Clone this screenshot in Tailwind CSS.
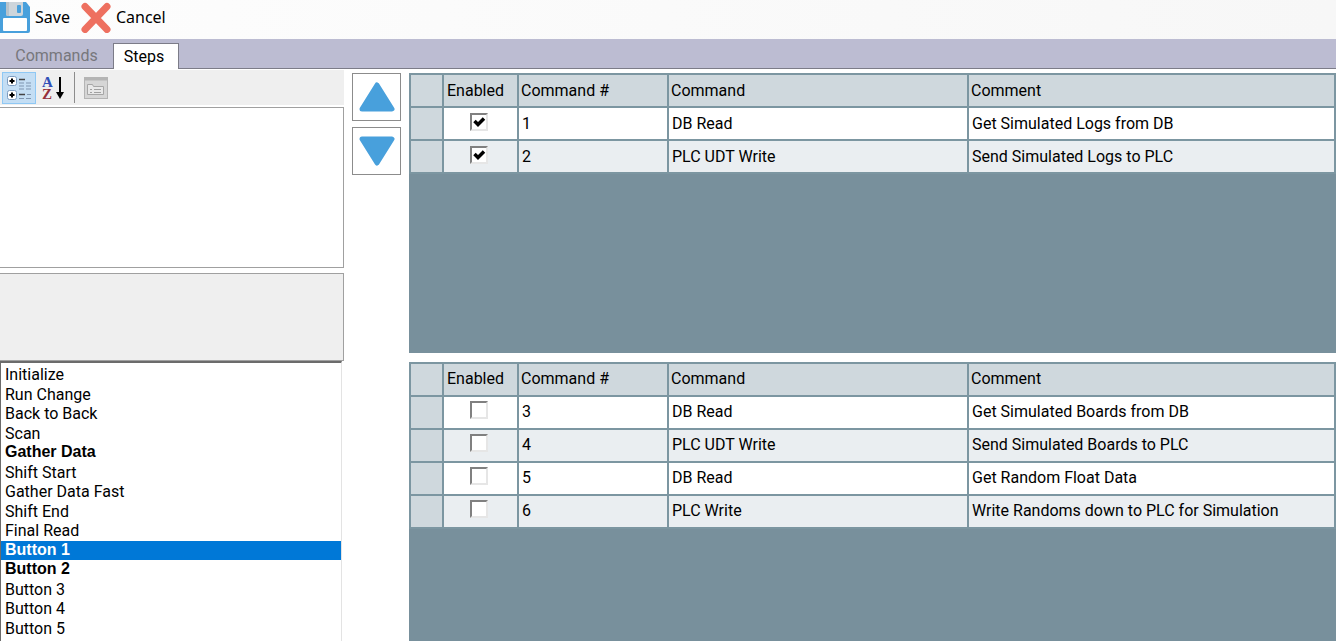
<!DOCTYPE html>
<html lang="en">
<head>
  <meta charset="UTF-8">
  <meta name="viewport" content="width=device-width, initial-scale=1.0">
  <title>Steps</title>
  <script src="https://cdn.jsdelivr.net/npm/@tailwindcss/browser@4"></script>
</head>
<body class="flex flex-col h-screen overflow-hidden bg-white text-black text-base font-['Roboto','Liberation_Sans',sans-serif]">

  <!-- toolbar -->
  <header class="flex shrink-0 items-start h-[39px] gap-2.5 bg-linear-to-r from-[#fdfdfd] to-[#f7f7f7] font-['Noto_Sans','Open_Sans',sans-serif]">
    <button class="flex items-center h-[34px] gap-1">
      <svg class="w-[31px] h-8" viewBox="0 0 31 32">
        <path d="M0 1h26l4 5v24a2 2 0 0 1-2 2H0z" fill="#48a0dc"/>
        <path d="M6 1h17v12a2 2 0 0 1-2 2H8a2 2 0 0 1-2-2z" fill="#cdd5db"/>
        <path d="M6 1h3v14H8a2 2 0 0 1-2-2z" fill="#b8c3cb"/>
        <rect x="17" y="4" width="4" height="8" rx="1" fill="#48a0dc"/>
        <rect x="3" y="17" width="24" height="13" rx="1" fill="#fff"/>
      </svg>
      Save
    </button>
    <button class="flex items-center h-[34px] gap-1">
      <svg class="w-8 h-8" viewBox="0 0 32 32">
        <path d="M5 5.500L27 28.500M27 5.500L5 28.500" stroke="#ee7060" stroke-width="7" stroke-linecap="round"/>
      </svg>
      Cancel
    </button>
  </header>

  <!-- tabs -->
  <nav class="flex shrink-0 items-end h-[30px] bg-[#bcbcd2] border-b border-[#7c7c88]">
    <button class="w-[113px] h-[25px] text-[#77777c]">Commands</button>
    <button class="w-[66px] h-[26px] -mb-px pr-1 bg-white border border-b-0 border-[#7c7c88]">Steps</button>
  </nav>

  <main class="flex flex-1 min-h-0 pt-px">
    <section class="flex flex-col shrink-0 w-[344px]">
      <div class="flex shrink-0 items-center h-[35px] pl-0.5 bg-[#efefef]">
        <button aria-label="Categorized" class="flex items-center justify-center w-[34px] h-8 bg-[#c4def4] border border-[#8fc8f4]">
          <svg class="w-6 h-6" viewBox="0 0 24 24">
            <g fill="#fff" stroke="#7d9cc0">
              <rect x="0.500" y="0.500" width="9" height="9" rx="2"/>
              <rect x="0.500" y="14.500" width="9" height="9" rx="2"/>
            </g>
            <path d="M2.500 5h5M5 2.500v5M2.500 19h5M5 16.500v5" stroke="#000" stroke-width="2"/>
            <path d="M12 3.500h6M12 18.500h6" stroke="#444" stroke-width="1.500"/>
            <path d="M12 7h5M19 7h5M12 10h5M19 10h5M12 13h5M19 13h5M12 22.500h5M19 22.500h5M20 18.500h4" stroke="#7f95b0"/>
          </svg>
        </button>
        <button aria-label="Alphabetical" class="flex items-center justify-center w-[34px] h-8">
          <svg class="w-6 h-8" viewBox="0 0 24 32" font-family="Liberation Serif, serif" font-size="15" font-weight="bold">
            <text x="1" y="15" fill="#3050b8">A</text>
            <text x="1" y="27" fill="#96303c">Z</text>
            <path d="M19 5v17" stroke="#000" stroke-width="2"/>
            <path d="M15 20h8l-4 7z" fill="#000"/>
          </svg>
        </button>
        <span class="w-px h-[31px] mx-1 bg-[#8c8c8c]"></span>
        <button aria-label="Property Pages" disabled class="flex items-center justify-center w-[34px] h-8">
          <svg class="w-6 h-6" viewBox="0 0 24 24" fill="none" stroke="#b4b4b4">
            <rect x="0.500" y="1.500" width="23" height="21" fill="#d6d6d6"/>
            <path d="M1 3h22" stroke-width="3"/>
            <path d="M3.500 8.500h5l1 2h10v8h-16z" fill="#e8e8e8" stroke="#a6a6a6"/>
            <path d="M6 13.500h2M6 16.500h2M10 13.500h7M10 16.500h7" stroke="#a0a0a0"/>
          </svg>
        </button>
      </div>
      <div class="shrink-0 h-[161px] mt-[2px] border border-l-0 border-[#a0a0a0]"></div>
      <div class="shrink-0 h-[88px] mt-[5px] bg-[#efefef] border border-l-0 border-[#a0a0a0]"></div>
      <select size="14" aria-label="Steps" class="flex-1 min-h-0 w-[342px] pt-0.5 overflow-hidden bg-white rounded-none outline-none border-t-2 border-l border-r border-t-[#6b6b6b] border-l-[#6b6b6b] border-r-[#e3e3e3]" id="steps"></select>
    </section>

    <!-- move up / down -->
    <div class="flex flex-col shrink-0 gap-[6px] ml-2 pt-[3px] w-[57px]">
      <button aria-label="Move up" class="flex items-center justify-center w-[49px] h-12 bg-white border border-[#8c8c8c]">
        <svg class="w-9 h-[30px]" viewBox="0 0 36 30"><path d="M18 3L33 27H3z" fill="#48a0dc" stroke="#48a0dc" stroke-width="5" stroke-linejoin="round"/></svg>
      </button>
      <button aria-label="Move down" class="flex items-center justify-center w-[49px] h-12 bg-white border border-[#8c8c8c]">
        <svg class="w-9 h-[30px]" viewBox="0 0 36 30"><path d="M18 27L33 3H3z" fill="#48a0dc" stroke="#48a0dc" stroke-width="5" stroke-linejoin="round"/></svg>
      </button>
    </div>

    <section class="flex flex-col flex-1 min-w-0 gap-[9px] pt-[3px]">
      <div class="flex-1 bg-[#78909c]" id="enabledGrid"></div>
      <div class="flex-1 bg-[#78909c]" id="disabledGrid"></div>
    </section>
  </main>

  <script>
    const steps = ['Initialize', 'Run Change', 'Back to Back', 'Scan', 'Gather Data', 'Shift Start', 'Gather Data Fast',
      'Shift End', 'Final Read', 'Button 1', 'Button 2', 'Button 3', 'Button 4', 'Button 5'];
    const bold = ['Gather Data', 'Button 1', 'Button 2'];

    document.getElementById('steps').innerHTML = steps.map(s => `
      <option class="odd:h-5 even:h-[19px] min-h-0 py-0 px-1 leading-[19px] checked:bg-linear-to-r checked:from-[#0078d7] checked:to-[#0078d7] checked:[-webkit-text-fill-color:white] ${bold.includes(s) ? "font-bold font-['Liberation_Sans',sans-serif]" : 'font-normal'}" ${s === 'Button 1' ? 'selected' : ''}>${s}</option>`).join('');

    const commands = [
      { id: 1, on: true, name: 'DB Read', comment: 'Get Simulated Logs from DB' },
      { id: 2, on: true, name: 'PLC UDT Write', comment: 'Send Simulated Logs to PLC' },
      { id: 3, on: false, name: 'DB Read', comment: 'Get Simulated Boards from DB' },
      { id: 4, on: false, name: 'PLC UDT Write', comment: 'Send Simulated Boards to PLC' },
      { id: 5, on: false, name: 'DB Read', comment: 'Get Random Float Data' },
      { id: 6, on: false, name: 'PLC Write', comment: 'Write Randoms down to PLC for Simulation' }
    ];

    function grid(rows) {
      return `
      <table class="w-full table-fixed border-collapse border-2 border-[#7c96a1]">
        <thead>
          <tr class="h-[33px] bg-[#cfd8dd] text-left">
            <th class="w-[33px] border-2 border-[#7c96a1]"></th>
            <th class="w-[75px] border-2 border-[#7c96a1] p-0 pl-[3px] font-normal">Enabled</th>
            <th class="w-[150px] border-2 border-[#7c96a1] p-0 pl-0.5 font-normal">Command #</th>
            <th class="w-[300px] border-2 border-[#7c96a1] p-0 pl-0.5 font-normal">Command</th>
            <th class="border-2 border-[#7c96a1] p-0 pl-0.5 font-normal">Comment</th>
          </tr>
        </thead>
        <tbody>${rows.map(r => `
          <tr class="h-[33px] odd:bg-white even:bg-[#eaeef1]">
            <td class="bg-[#cfd8dd] border-2 border-[#7c96a1]"></td>
            <td class="border-2 border-[#7c96a1] p-0">
              <label class="relative block w-[18px] h-[18px] ml-[26px] mb-1">
                <input type="checkbox" aria-label="Enable command ${r.id}" class="peer block appearance-none w-[18px] h-[18px] bg-white border-2 border-t-[#808080] border-l-[#808080] border-r-[#e6e6e6] border-b-[#e6e6e6]" ${r.on ? 'checked' : ''}>
                <svg class="absolute inset-0 hidden peer-checked:block" viewBox="0 0 18 18"><path d="M4.500 8L8 11.500L14 5.500" fill="none" stroke="#000" stroke-width="3.500"/></svg>
              </label>
            </td>
            <td class="border-2 border-[#7c96a1] p-0 pl-[3px]">${r.id}</td>
            <td class="border-2 border-[#7c96a1] p-0 pl-[3px]">${r.name}</td>
            <td class="border-2 border-[#7c96a1] p-0 pl-[3px]">${r.comment}</td>
          </tr>`).join('')}
        </tbody>
      </table>`;
    }

    document.getElementById('enabledGrid').innerHTML = grid(commands.filter(c => c.on));
    document.getElementById('disabledGrid').innerHTML = grid(commands.filter(c => !c.on));
  </script>
</body>
</html>
